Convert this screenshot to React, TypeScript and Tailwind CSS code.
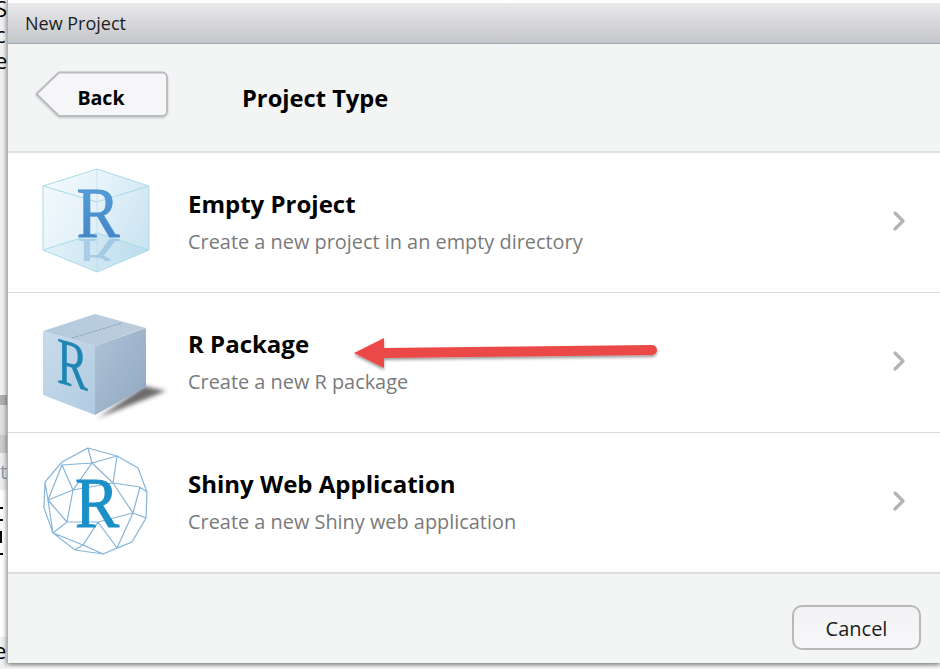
import { ChevronRight } from "lucide-react";
import type { ReactNode } from "react";

const font = { fontFamily: '"Open Sans", "Noto Sans", sans-serif' };
const serif = "Liberation Serif, serif";

function EmptyIcon() {
  return (
    <svg width="150" height="130" viewBox="0 3 150 130" className="blur-[0.5px]">
      <defs>
        <linearGradient id="emptyL" x1="0" y1="0" x2="1" y2="1">
          <stop offset="0" stopColor="#f6fbfe" />
          <stop offset="1" stopColor="#d9ecf6" />
        </linearGradient>
        <linearGradient id="emptyR" x1="0" y1="0" x2="1" y2="1">
          <stop offset="0" stopColor="#eaf5fb" />
          <stop offset="1" stopColor="#c5e0ef" />
        </linearGradient>
        <linearGradient id="emptyFloor" x1="0" y1="0" x2="1" y2="0">
          <stop offset="0" stopColor="#e2f1f8" />
          <stop offset="1" stopColor="#bcdcec" />
        </linearGradient>
        <linearGradient id="emptyText" x1="0" y1="0" x2="0" y2="1">
          <stop offset="0" stopColor="#5aa5dc" />
          <stop offset="1" stopColor="#3f7fc4" />
        </linearGradient>
        <clipPath id="emptyClip">
          <rect x="40" y="84" width="70" height="22" />
        </clipPath>
      </defs>
      <polygon points="77,14 129,31 129,95 77,117" fill="url(#emptyR)" />
      <polygon points="23,31 77,14 77,117 23,95" fill="url(#emptyL)" />
      <polygon points="23,95 77,78 129,95 77,117" fill="url(#emptyFloor)" />
      <g fill="none" stroke="#a9dbe8" strokeWidth="1">
        <polygon points="23,31 77,14 129,31 129,95 77,117 23,95" />
        <polyline points="23,31 77,47 129,31" />
        <polyline points="23,95 77,78 129,95" />
        <line x1="77" y1="14" x2="77" y2="117" strokeOpacity="0.5" />
      </g>
      <g clipPath="url(#emptyClip)" opacity="0.3">
        <text
          transform="translate(78 84) scale(0.9 -0.75)"
          textAnchor="middle"
          fontSize="72"
          fontFamily={serif}
          fill="#4a90cd"
        >
          R
        </text>
      </g>
      <text
        transform="translate(78 82) scale(0.9 1)"
        textAnchor="middle"
        fontSize="72"
        fontFamily={serif}
        fill="url(#emptyText)"
        stroke="#4a90cd"
        strokeWidth="0.8"
      >
        R
      </text>
    </svg>
  );
}

function PackageIcon() {
  return (
    <svg width="160" height="125" viewBox="0 0 160 125" className="blur-[0.4px]">
      <defs>
        <linearGradient id="pkgL" x1="0" y1="0" x2="1" y2="1">
          <stop offset="0" stopColor="#c8dbeb" />
          <stop offset="1" stopColor="#b2cbe2" />
        </linearGradient>
        <linearGradient id="pkgR" x1="0" y1="0" x2="1" y2="1">
          <stop offset="0" stopColor="#afc2d6" />
          <stop offset="1" stopColor="#8fa8c2" />
        </linearGradient>
        <linearGradient id="pkgTop" x1="0" y1="0" x2="1" y2="0">
          <stop offset="0" stopColor="#b4cbde" />
          <stop offset="1" stopColor="#bccddc" />
        </linearGradient>
        <filter id="pkgBlur">
          <feGaussianBlur stdDeviation="2" />
        </filter>
      </defs>
      <polygon points="124,86 146,91 78,118" fill="#3a3a3a" fillOpacity="0.75" filter="url(#pkgBlur)" />
      <polygon points="75,46 126,28 126,87 75,115" fill="url(#pkgR)" />
      <polygon points="23,31 75,46 75,115 23,95" fill="url(#pkgL)" />
      <polygon points="23,31 75,14 126,28 75,46" fill="url(#pkgTop)" />
      <line x1="52" y1="38" x2="102" y2="23" stroke="#8ea7be" strokeWidth="1" strokeDasharray="3 1" />
      <text
        transform="translate(37 82) skewY(16) scale(0.7 1)"
        fontSize="66"
        fontFamily={serif}
        fill="#1f86b4"
        stroke="#1f86b4"
        strokeWidth="0.6"
      >
        R
      </text>
    </svg>
  );
}

function ShinyIcon() {
  const mesh =
    "M68 13L97 21L118 33L127 57L126 83L112 107L83 119L55 115L33 98L24 73L25 47L42 27Z" +
    "M68 13L72 28L97 21M72 28L42 30L53 55L72 28L93 48L97 21M42 30L28 65L53 55M28 65L25 47M28 65L33 98" +
    "M28 65L47 87L33 98M53 55L47 87L78 87L63 110L33 98M93 48L120 52L127 57M93 48L113 78L126 83" +
    "M113 78L78 87M113 78L97 113L112 107M78 87L97 113L83 119L63 110L55 115M53 55L93 48M120 52L113 78";
  return (
    <svg width="150" height="130" viewBox="0 3 150 130" className="blur-[0.4px]">
      <path d={mesh} fill="none" stroke="#86b5d9" strokeWidth="1.2" />
      <text
        transform="translate(77 92) scale(0.92 1)"
        textAnchor="middle"
        fontSize="72"
        fontFamily={serif}
        fill="#1b90c8"
        stroke="#1b90c8"
        strokeWidth="1"
      >
        R
      </text>
    </svg>
  );
}

function ProjectRow({ icon, title, desc }: { icon: ReactNode; title: string; desc: string }) {
  return (
    <div className="flex h-[140px] items-center border-b border-[#dcdcdc] bg-white">
      <div className="flex h-full w-[180px] shrink-0 items-center pl-[12px]">{icon}</div>
      <div className="flex-1 pb-[1px]">
        <div className="text-[24px] leading-[32px] font-bold text-black">{title}</div>
        <div className="mt-[8px] text-[19.9px] leading-[28px] text-[#7a7a7a]">{desc}</div>
      </div>
      <ChevronRight className="mr-[25px] -mt-[3px] h-[32px] w-[32px] text-[#b4b4b4] blur-[0.4px]" strokeWidth={2.4} />
    </div>
  );
}

export default function App() {
  return (
    <div className="relative flex h-[669px] w-[940px] overflow-hidden bg-white" style={font}>
      {/* what shows behind the dialog */}
      <div className="flex w-[7px] shrink-0 flex-col overflow-hidden bg-[#f1f1f1] text-[22px] leading-[26px] text-black">
        <div className="-mt-[5px] -ml-[5px] h-[100px]">
          <div>S</div>
          <div>c</div>
          <div>e</div>
        </div>
        <div className="mt-[300px] h-[10px] bg-[#b0b0b0]" />
        <div className="h-[30px] bg-[#e0e0e0]" />
        <div className="h-[18px] bg-[#cccccc]" />
        <div className="h-[37px] overflow-hidden bg-[#eeeeee] pt-[6px] pl-[0px] text-[20px] leading-[26px] text-[#8a9bb0]">t</div>
        <div className="flex h-[147px] flex-col gap-[10px] bg-white pt-[17px]">
          <div className="h-[2px] w-[3px] bg-black" />
          <div className="h-[2px] w-[3px] bg-black" />
          <div className="h-[12px] w-[2px] bg-black" />
          <div className="h-[2px] w-[3px] bg-black" />
        </div>
        <div className="flex-1 -ml-[6px] leading-[26px]">e</div>
      </div>

      <div className="flex h-[663px] flex-1 flex-col border-l border-[#b0b3b6] pt-[3px] shadow-[0_2px_5px_rgba(0,0,0,0.55)]">
        <div className="flex h-[41px] shrink-0 items-center border-b border-[#a3a5a8] bg-gradient-to-b from-[#e9e9eb] to-[#c5c6c9] pl-[17px] text-[18px] text-[#1c1c1c]">
          New Project
        </div>

        <div className="flex h-[109px] shrink-0 items-center border-b-2 border-[#dedfe0] bg-[#f3f4f4] pl-[27px]">
          <div className="relative -mt-[6px] flex h-[48px] w-[134px] items-center justify-center pr-[2px] text-[19.6px] font-bold text-black">
            <svg viewBox="0 0 134 48" className="absolute inset-0 h-full w-full drop-shadow-[0_1px_1px_rgba(0,0,0,0.2)]">
              <path
                d="M24 1.5H127a5 5 0 0 1 5 5V40a5 5 0 0 1-5 5H24L1.5 23Z"
                fill="#f6f6f8"
                stroke="#b9bbc2"
                strokeWidth="1.8"
                strokeLinejoin="round"
              />
            </svg>
            <span className="relative mt-[7px]">Back</span>
          </div>
          <div className="mt-[2px] ml-[73px] text-[23.7px] font-bold text-black">Project Type</div>
        </div>

        <ProjectRow icon={<EmptyIcon />} title="Empty Project" desc="Create a new project in an empty directory" />
        <ProjectRow icon={<PackageIcon />} title="R Package" desc="Create a new R package" />
        <ProjectRow icon={<ShinyIcon />} title="Shiny Web Application" desc="Create a new Shiny web application" />

        <div className="flex flex-1 items-end justify-end border-t border-[#dedfe0] bg-[#f3f4f4] pr-[19px] pb-[13px]">
          <button className="h-[45px] w-[129px] rounded-[10px] border-2 border-[#b9b9b9] bg-gradient-to-b from-[#f2f2f4] to-[#f8f8fa] pt-[2px] text-[20px] text-[#1c1c1c]">
            Cancel
          </button>
        </div>
      </div>

      {/* annotation arrow over the R Package row */}
      <svg width="320" height="40" viewBox="0 0 320 40" className="absolute top-[333px] left-[345px]">
        <defs>
          <filter id="arrowShadow" x="-5%" y="-30%" width="110%" height="170%">
            <feDropShadow dx="0" dy="2" stdDeviation="1.5" floodColor="#000" floodOpacity="0.4" />
          </filter>
        </defs>
        <path d="M9 20L39 5V15L307 12a5 5 0 0 1 0 10L39 25V35Z" fill="#ea4a46" filter="url(#arrowShadow)" />
      </svg>
    </div>
  );
}
